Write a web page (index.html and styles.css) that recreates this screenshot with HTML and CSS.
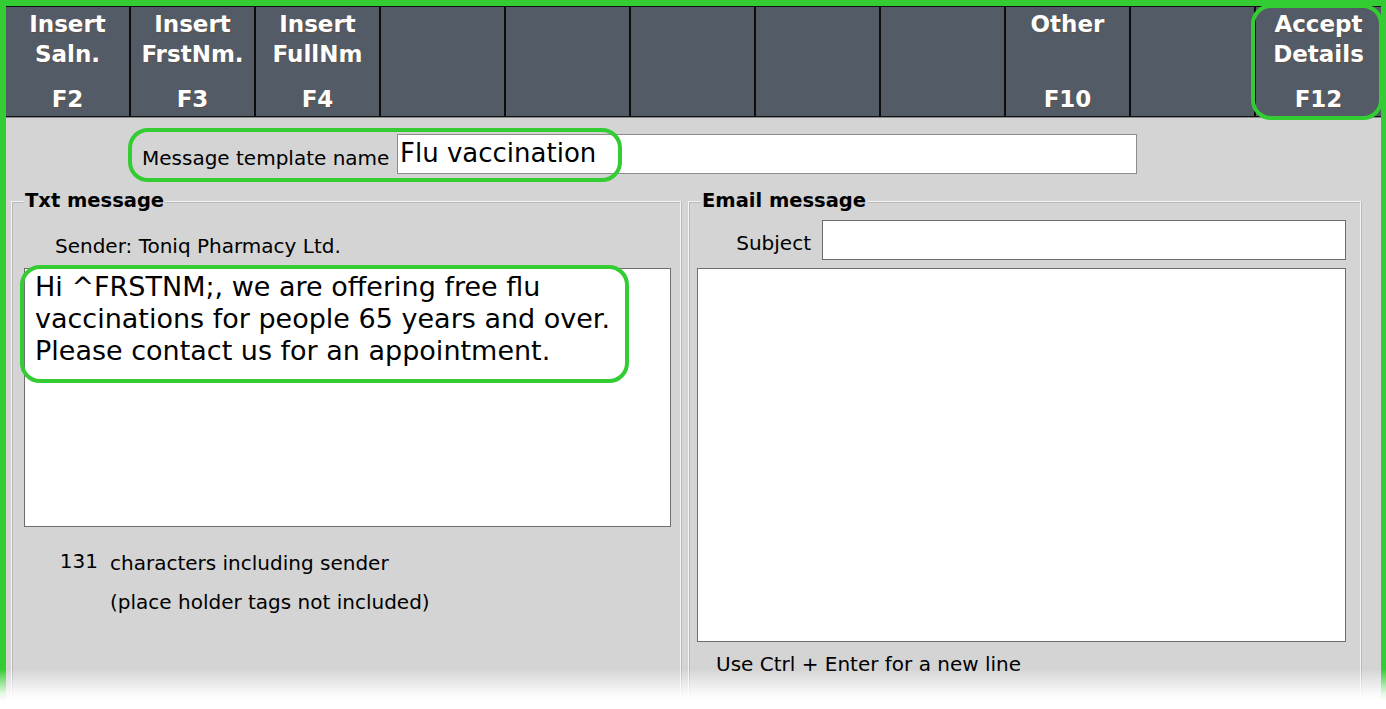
FILE: index.html
```html
<!DOCTYPE html>
<html>
<head>
<meta charset="utf-8">
<link rel="stylesheet" href="styles.css">
</head>
<body>
<div class="frame">
  <div class="toolbar">
    <div class="fkey"><span class="fk-label">Insert<br>Saln.</span><span class="fk-code">F2</span></div>
    <div class="fkey"><span class="fk-label">Insert<br>FrstNm.</span><span class="fk-code">F3</span></div>
    <div class="fkey"><span class="fk-label">Insert<br>FullNm</span><span class="fk-code">F4</span></div>
    <div class="fkey"></div>
    <div class="fkey"></div>
    <div class="fkey"></div>
    <div class="fkey"></div>
    <div class="fkey"></div>
    <div class="fkey"><span class="fk-label">Other</span><span class="fk-code">F10</span></div>
    <div class="fkey"></div>
    <div class="fkey"><span class="fk-label">Accept<br>Details</span><span class="fk-code">F12</span></div>
  </div>
  <div class="content">
    <div class="template-row">
      <span class="template-label">Message template name</span>
      <div class="template-input">Flu vaccination</div>
    </div>
    <div class="panels">
      <div class="group group-txt">
        <div class="legend">Txt message</div>
        <div class="sender">Sender: Toniq Pharmacy Ltd.</div>
        <div class="textbox txt-box">Hi ^FRSTNM;, we are offering free flu<br>vaccinations for people 65 years and over.<br>Please contact us for an appointment.</div>
        <div class="count-row"><span class="count">131</span><span class="count-text">characters including sender</span></div>
        <div class="count-note">(place holder tags not included)</div>
      </div>
      <div class="group group-email">
        <div class="legend">Email message</div>
        <div class="subject-row"><span class="subject-label">Subject</span><div class="subject-input"></div></div>
        <div class="textbox email-box"></div>
        <div class="hint">Use Ctrl + Enter for a new line</div>
      </div>
    </div>
  </div>
  <div class="mark mark-accept"></div>
  <div class="mark mark-template"></div>
  <div class="mark mark-text"></div>
  <div class="fade"></div>
</div>
</body>
</html>
```

FILE: styles.css
```css
* { box-sizing: border-box; }
html, body { margin: 0; padding: 0; background: #ffffff; }
body {
  width: 1386px;
  height: 709px;
  overflow: hidden;
  font-family: "DejaVu Sans", "Liberation Sans", sans-serif;
  color: #000;
}
.frame {
  position: relative;
  width: 1386px;
  height: 709px;
  border-top: 6px solid #33cc33;
  border-left: 6px solid #33cc33;
  border-right: 5px solid #33cc33;
  background: #d4d4d4;
}
.toolbar {
  display: flex;
  height: 111px;
  background: #525b66;
  border-top: 1px solid #111;
  border-bottom: 1px solid #111;
  box-shadow: 0 1px 0 #8a8a8a;
}
.fkey {
  width: 125px;
  flex: none;
  border-right: 2px solid #0c0c0c;
  display: flex;
  flex-direction: column;
  justify-content: space-between;
  align-items: center;
  padding: 2px 0 2px;
  color: #fff;
  font-weight: bold;
  font-size: 23px;
  line-height: 30px;
  text-align: center;
  text-shadow: 1px 1px 0 rgba(110, 70, 30, 0.5);
}
.fkey:last-child { border-right: none; }
.content {
  padding: 17px 20px 0 5px;
}
.template-row {
  display: flex;
  align-items: flex-end;
  height: 40px;
  padding-left: 131px;
}
.template-label {
  font-size: 20px;
  width: 255px;
  padding-bottom: 4px;
}
.template-input {
  width: 740px;
  height: 40px;
  background: #fff;
  border: 1px solid #8c8c8c;
  font-size: 26px;
  line-height: 36px;
  padding-left: 2px;
}
.panels {
  display: flex;
  gap: 7px;
  margin-top: 27px;
}
.group {
  position: relative;
  border: 1px solid #f4f4f4;
  box-shadow: inset 1px 1px 0 #b8b8b8, 1px 1px 0 #b8b8b8;
  height: 520px;
}
.group-txt { width: 670px; padding: 0 9px 0 12px; }
.group-email { width: 673px; padding: 0 14px 0 8px; }
.legend {
  position: absolute;
  top: -14px;
  left: 12px;
  background: #d4d4d4;
  font-weight: bold;
  font-size: 19.5px;
  line-height: 26px;
  padding: 0 1px;
}
.sender {
  font-size: 20px;
  line-height: 24px;
  padding: 32px 0 0 31px;
  height: 66px;
}
.textbox {
  background: #fff;
  border: 1px solid #6e6e6e;
}
.txt-box {
  height: 259px;
  font-size: 27px;
  line-height: 32px;
  padding: 2px 0 0 10px;
}
.count-row {
  display: flex;
  font-size: 20px;
  line-height: 24px;
  margin-top: 24px;
}
.count { width: 86px; text-align: right; padding-right: 12px; position: relative; top: -2px; }
.count-note {
  font-size: 20px;
  line-height: 24px;
  margin-top: 15px;
  padding-left: 86px;
}
.subject-row {
  display: flex;
  align-items: center;
  margin-top: 18px;
  height: 40px;
  margin-bottom: 8px;
}
.subject-label {
  font-size: 20px;
  width: 125px;
  text-align: right;
  padding-right: 11px;
  padding-top: 6px;
}
.subject-input {
  flex: 1;
  height: 40px;
  background: #fff;
  border: 1px solid #6e6e6e;
}
.email-box { height: 374px; }
.hint {
  font-size: 20px;
  line-height: 24px;
  padding: 10px 0 0 19px;
}
.mark {
  position: absolute;
  border: 4px solid #33cc33;
  border-radius: 20px;
  pointer-events: none;
}
.mark-accept { left: 1245px; top: -2px; width: 132px; height: 116px; }
.mark-template { left: 122px; top: 122px; width: 494px; height: 54px; }
.mark-text { left: 14px; top: 259px; width: 609px; height: 118px; }
.fade {
  position: absolute;
  left: -6px;
  right: -5px;
  bottom: 0;
  height: 40px;
  background: linear-gradient(to bottom, rgba(255,255,255,0) 0%, rgba(255,255,255,0.85) 60%, #fff 80%);
}
```
